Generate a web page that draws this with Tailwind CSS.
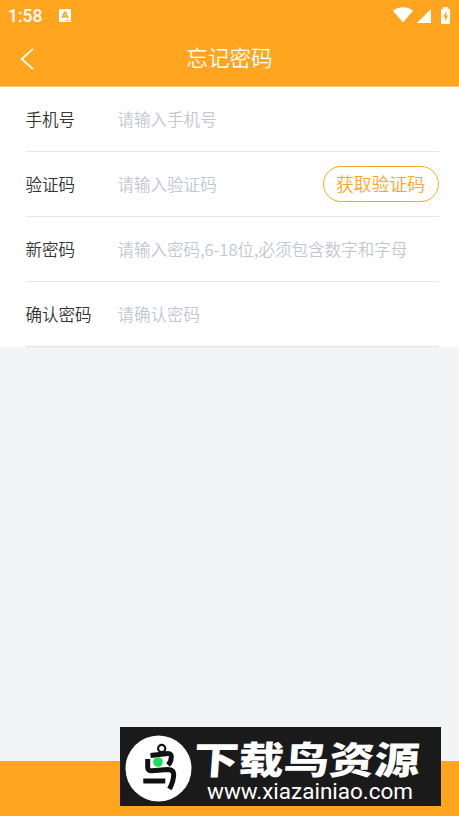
<!DOCTYPE html>
<html lang="zh-CN">
<head>
    <meta charset="UTF-8">
    <meta name="viewport" content="width=device-width, initial-scale=1.0">
    <title>忘记密码</title>
    <script src="https://cdn.jsdelivr.net/npm/@tailwindcss/browser@4"></script>
    <style>
        body {
            font-family: 'Noto Sans CJK SC', sans-serif;
        }
    </style>
</head>
<body class="bg-[#f3f4f6] h-screen overflow-hidden flex flex-col relative font-[350]">
    <header class="bg-[#ffa51f] h-[87px] shrink-0 border-b border-[#ffc368]">
        <!-- Status bar -->
        <div class="h-8 flex items-center pl-2 pr-[9px] text-white">
            <span class="font-['Roboto'] font-medium text-[17.500px] leading-8">1:58</span>
            <svg class="ml-[17px] -mt-px" width="12" height="13" viewBox="0 0 12 13">
                <rect width="12" height="13" rx="1" fill="#fff"/>
                <path d="M3.2 9.3 5.6 3.3h.8l2.4 6M4.2 7.4h3.6" fill="none" stroke="#ffa51f" stroke-width="1.6"/>
                <path d="M6.5 11.4h4" stroke="#ffa51f" stroke-width="1" stroke-dasharray="1 .5"/>
            </svg>
            <svg class="ml-auto -mt-[2px]" width="20" height="16" viewBox="0 0 20 16">
                <path d="M0 3.7C5.5-.9 14.500-.9 20 3.700L10 15.600z" fill="#fff"/>
            </svg>
            <svg class="ml-1" width="14" height="14" viewBox="0 0 14 14">
                <path d="M14 0v14H0z" fill="#fff"/>
            </svg>
            <svg class="ml-[10px] -mt-[2px]" width="9" height="17" viewBox="0 0 9 17">
                <path d="M2.500 0h4v1.800H8q1 0 1 1V16q0 1-1 1H1q-1 0-1-1V2.800q0-1 1-1h1.500z" fill="#fff"/>
                <path d="M6 4 2 9.800h2v4.500L7.200 8.500H5z" fill="#ffa51f"/>
            </svg>
        </div>
        <!-- Title bar -->
        <div class="h-[54px] grid grid-cols-[60px_1fr_60px] items-center text-white">
            <button class="pl-5" aria-label="返回">
                <svg width="14" height="22" viewBox="0 0 14 22" fill="none" stroke="#fff" stroke-width="1.8">
                    <path d="M13 .8 1.800 11 13 21.200"/>
                </svg>
            </button>
            <h1 class="text-center text-[21.600px] leading-8 pb-1 font-[350]">忘记密码</h1>
        </div>
    </header>

    <main class="bg-white pl-[25.500px] pr-[20.500px] text-[16.550px] shrink-0">
        <label class="h-[65px] flex items-center border-b border-[#e6e7ec]">
            <span class="w-[92px] text-[#333]">手机号</span>
            <input type="text" placeholder="请输入手机号" class="flex-1 min-w-0 outline-none placeholder:text-[#c3c6d0]">
        </label>
        <div class="h-[65px] flex items-center border-b border-[#e6e7ec]">
            <span class="w-[92px] text-[#333]">验证码</span>
            <input type="text" placeholder="请输入验证码" class="flex-1 min-w-0 outline-none placeholder:text-[#c3c6d0]">
            <button class="w-[116px] h-9 shrink-0 rounded-full border-[1.400px] border-[#ffa51f] text-[#ffa51f] text-[17.800px] leading-8 pb-[3px]">获取验证码</button>
        </div>
        <label class="h-[65px] flex items-center border-b border-[#e6e7ec]">
            <span class="w-[92px] text-[#333]">新密码</span>
            <input type="text" placeholder="请输入密码,6-18位,必须包含数字和字母" class="flex-1 min-w-0 outline-none placeholder:text-[#c3c6d0]">
        </label>
        <label class="h-[65px] flex items-center border-b border-[#e0e4ea]">
            <span class="w-[92px] text-[#333]">确认密码</span>
            <input type="text" placeholder="请确认密码" class="flex-1 min-w-0 outline-none placeholder:text-[#c3c6d0]">
        </label>
    </main>

    <footer class="mt-auto h-[55px] shrink-0 bg-[#ffa51f]"></footer>

    <!-- Site banner over the footer -->
    <div class="absolute left-[120px] top-[727px] w-[321px] h-[79px] bg-[#1a1a1a] flex items-center text-white">
        <svg class="ml-[5px] mt-[3px] shrink-0" width="67" height="67" viewBox="0 0 67 67">
            <circle cx="33.500" cy="33.500" r="33" fill="#fff"/>
            <g fill="none" stroke="#111" stroke-width="5">
                <circle cx="36.700" cy="13.500" r="3.600" stroke-width="2.200"/>
                <path d="M25.500 20.500 43 18.500q3.500 0 3.300 3.500 0 5-3.300 8"/>
                <path d="M22.700 24v8.500q0 3.500 4 3.300l16-1.300q6 0 6 5-.2 7-4.200 14.500"/>
                <path d="M18.300 46h22"/>
            </g>
            <circle cx="33" cy="27" r="4.800" fill="#1fdc55"/>
        </svg>
        <svg class="shrink-0" width="249" height="79" viewBox="0 0 249 79" fill="#fff">
            <text x="1" y="47.500" textLength="226" lengthAdjust="spacingAndGlyphs" font-family="Noto Sans CJK SC" font-weight="900" font-size="38" transform="translate(3 0) skewX(-4)">下载鸟资源</text>
            <text x="15" y="71.500" textLength="206" lengthAdjust="spacingAndGlyphs" font-family="Roboto" font-weight="400" font-size="22.500">www.xiazainiao.com</text>
        </svg>
    </div>
</body>
</html>
